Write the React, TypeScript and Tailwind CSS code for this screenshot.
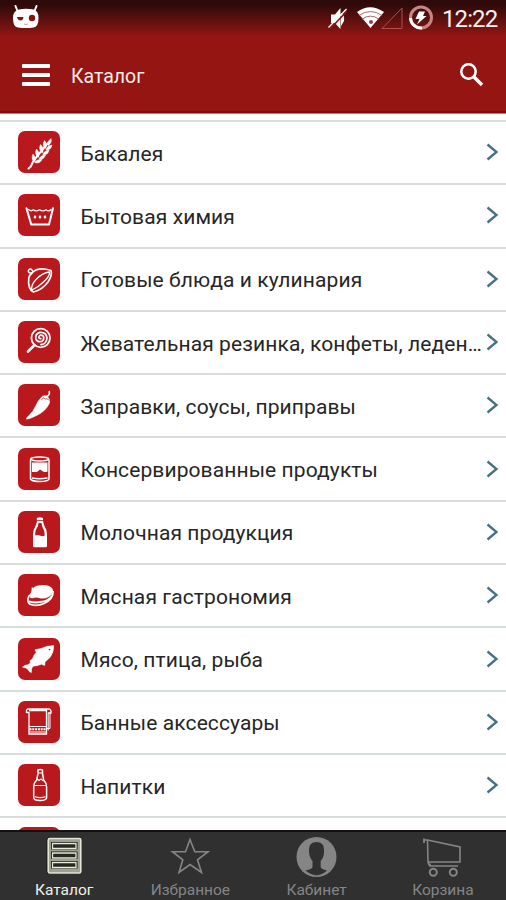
import type { ReactNode } from 'react';

type Category = { title: string; icon: ReactNode };

const CATEGORIES: Category[] = [
  {
    title: 'Бакалея',
    icon: (
      <g fill="#fff" stroke="#fff" strokeWidth=".5">
        <path d="M10.500 37.500 12.800 35.500Q14 31 18.500 26L30 12" fill="none" strokeWidth="2" strokeLinecap="round" />
        <path d="M33 7.500Q34.500 11 30.500 14.500Q27 13 33 7.500Z" />
        <path d="M26.500 9.500Q30 13 27.500 17.500Q23.500 14.500 26.500 9.500Z" />
        <path d="M22.500 13.500Q26.500 17 24.500 22Q20 19 22.500 13.500Z" />
        <path d="M18.500 18Q22.500 21.500 20.500 26.500Q16 23.500 18.500 18Z" />
        <path d="M15 23Q18.500 26 16.800 31Q12.500 28 15 23Z" />
        <path d="M34 14Q33 19.500 28 19Q29 14.500 34 14Z" />
        <path d="M31 19.300Q30 24.500 24.800 23.800Q26 19.500 31 19.300Z" />
        <path d="M27.500 24Q26 29 21 28Q22.500 24 27.500 24Z" />
        <path d="M24 28.500Q22 33 16.800 31.700Q18.500 28 24 28.500Z" />
      </g>
    ),
  },
  {
    title: 'Бытовая химия',
    icon: (
      <g fill="none" stroke="#fff" strokeLinejoin="round" strokeLinecap="round">
        <path d="M8.500 14.300 13.200 30.400H31L35 14.300" strokeWidth="2" />
        <path d="M10.500 15.500Q13 17.800 15.500 15.800Q18 18 21.500 15.800Q25 18 28 15.800Q31 18 33 15.500" strokeWidth="1.300" />
        <path d="M17 22.800v.5M22 22.800v.5M27 22.800v.5" strokeWidth="2.500" />
      </g>
    ),
  },
  {
    title: 'Готовые блюда и кулинария',
    icon: (
      <g fill="none" stroke="#fff" strokeWidth="1.700" strokeLinejoin="round" strokeLinecap="round">
        <path d="M14 15Q20 8.500 33 12.500Q34.500 17 30 24Q24 32 15.500 34Q9.500 31 10.800 20Q11.500 17 14 15Z" />
        <path d="M14 32Q12.500 27.500 18 21.500Q24 15 31.500 14Q32 18 26 23.500Q20 29.500 14 32Z" strokeWidth="1.300" />
        <path d="M14 15Q9.500 15 10.500 12.200Q13 9.500 14.500 13" strokeWidth="1.500" />
      </g>
    ),
  },
  {
    title: 'Жевательная резинка, конфеты, леден…',
    icon: (
      <g fill="none" stroke="#fff" strokeLinecap="round">
        <circle cx="22.700" cy="17" r="9.300" strokeWidth="1.800" />
        <path d="M16.500 24 10 30.500" strokeWidth="2.600" />
        <path d="M22.800 17.700Q20.500 17.600 21 15.600Q22.500 13 25 14.800Q27 18 24 20.200Q19.700 21.800 17.800 18Q17 12.500 22 11.300Q28.500 11 29 17Q28.500 23 23 23.700" strokeWidth="1.700" />
      </g>
    ),
  },
  {
    title: 'Заправки, соусы, приправы',
    icon: (
      <g>
        <path d="M22.500 14.500Q24 11 28.500 12Q33 15 31 20Q27.500 27 19.500 31Q13 34.500 8.500 35.200Q8 34 11 31.500Q15 28 18 21.500Q20 16.500 22.500 14.500Z" fill="#fff" stroke="#fff" strokeWidth=".6" />
        <path d="M28.500 12.500Q32 11.500 31.300 7.500" fill="none" stroke="#fff" strokeWidth="1.700" strokeLinecap="round" />
        <path d="M23.500 15.500Q26 12.500 27.500 15Q30 14 31 16.500" fill="none" stroke="#b9191c" strokeWidth=".7" />
      </g>
    ),
  },
  {
    title: 'Консервированные продукты',
    icon: (
      <g fill="none" stroke="#fff" strokeWidth="1.500">
        <path d="M12.500 11.500V31Q14 33.500 22 33.500T31 31V11.500" />
        <path d="M14 14.500H29.500V23.500Q27 24.500 25 23.500L22 21.500 19 24H14Z" fill="#fff" stroke="none" />
        <ellipse cx="21.700" cy="11" rx="9" ry="2" />
        <path d="M14 30Q21 31.500 29.500 30" />
      </g>
    ),
  },
  {
    title: 'Молочная продукция',
    icon: (
      <g>
        <path d="M18.800 7Q21.800 5.500 25 7V9.200H18.800Z" fill="#fff" />
        <path d="M19 10H25L26 14Q29 19 29 23V35Q29 36.300 27.500 36.300H16.500Q15 36.300 15 35V23Q15 19 18 14Z" fill="#fff" />
        <path d="M20.500 12H23.500L24.200 15.500Q26.800 19.500 26.800 24.500Q24.500 25.800 22.500 24.800Q19.500 23.500 17.200 24.500Q17 19 19.800 15.500Z" fill="#b9191c" />
      </g>
    ),
  },
  {
    title: 'Мясная гастрономия',
    icon: (
      <g fill="#fff">
        <path d="M15 17Q14 12.500 20 11.500Q31 9.500 34.700 15Q36 20 30.500 23Q26 25.500 21 24Q18 23 15 24.200Q11.500 25 12 22Q14.500 20.500 15 17Z" />
        <path d="M14.500 13.500Q15 20 11 22Q8.500 27 11.500 30Q18 33 26 29.500Q35.500 25 35.200 17" fill="none" stroke="#fff" strokeWidth="1.700" />
        <path d="M11 27.500Q18 29.200 25.500 27.600Q31.500 26 34 22" fill="none" stroke="#fff" strokeWidth="2" />
      </g>
    ),
  },
  {
    title: 'Мясо, птица, рыба',
    icon: (
      <g>
        <path d="M35.700 7.500Q36 14 32 19.500L27 24 26.700 27.500 23.500 26.200Q19 28 15 28.200Q13 30.500 13.300 34.700Q10.500 33.500 9.500 31Q7.500 29.500 4.500 29.200Q6.500 26.800 9.700 26.800L12.300 25.200 12 22.800 14.300 21Q15.500 17 18.200 14.500L17 11.700Q20.500 11 23 10.500Q29 7.700 35.700 7.500Z" fill="#fff" stroke="#fff" strokeWidth=".5" />
        <circle cx="31.500" cy="11.500" r=".8" fill="#b9191c" />
      </g>
    ),
  },
  {
    title: 'Банные аксессуары',
    icon: (
      <g fill="none" stroke="#fff" strokeWidth="1.300">
        <path d="M8.500 12V9Q9 8 11 8H31.500Q33.500 9 33 12H30M8.500 11.500H11V33H28.500V9.500H11" />
        <path d="M30.200 12V29.500M32 12V27.500H29" strokeWidth="1" />
        <path d="M11 25.500H28.500M11 31H28.500" strokeWidth="1.200" />
        <path d="M11.500 28.300H28" strokeWidth="2" strokeDasharray="2 .8" />
      </g>
    ),
  },
  {
    title: 'Напитки',
    icon: (
      <g fill="none" stroke="#fff" strokeWidth="1.500" strokeLinejoin="round">
        <path d="M20 6Q22.200 4.800 24.500 6V9.500L25.700 16Q28.600 19 28.600 23V33.500Q28.500 36.500 22 36.500T15.700 33.500V23Q15.700 19 18.700 16L20 9.500Z" />
        <path d="M20 9H24.500M19 15 21 16.500 23 15 25.500 17M16.500 21.500H28.500M17 32.800Q22 34.500 27.500 32.800" strokeWidth="1.100" />
      </g>
    ),
  },
  { title: '', icon: null },
];

const TABS: Category[] = [
  {
    title: 'Каталог',
    icon: (
      <g>
        <rect x="2.500" y="2.500" width="35" height="36.500" rx="2" fill="#151510" />
        <rect x="4.200" y="3.500" width="32.600" height="34.500" rx="1.500" fill="#9da192" stroke="#e4e6d7" strokeWidth="1.600" />
        <path d="M7 7H33.500V14.500H7ZM7 16.500H33.500V24H7ZM7 26H33.500V33.500H7Z" fill="#14150f" />
        <path d="M8.500 8.500H32V13.500H8.500ZM8.500 18H32V23H8.500ZM8.500 27.500H32V32.500H8.500Z" fill="#262720" stroke="#e6e8da" strokeWidth="1.300" />
      </g>
    ),
  },
  {
    title: 'Избранное',
    icon: (
      <path
        d="M20 4.500 24.800 16.700H38L27.500 24.800 31.500 37.500 20 29.500 9 37.500 12.800 24.800 2.500 16.700H15.500Z"
        fill="none"
        stroke="#858585"
        strokeWidth="1.600"
      />
    ),
  },
  {
    title: 'Кабинет',
    icon: (
      <g>
        <circle cx="20.500" cy="22" r="20" fill="#858585" />
        <path d="M20.500 7Q28 7 28 14.500Q28.500 22 24.700 26V32Q25 34 31 35.500Q27 39.500 20.500 40.500Q14 39.500 9.500 35.500Q16.500 34 16.500 32V26Q12.800 22 13 14.500Q13 7 20.500 7Z" fill="#303030" />
      </g>
    ),
  },
  {
    title: 'Корзина',
    icon: (
      <g fill="none" stroke="#858585" strokeWidth="1.600">
        <path d="M2 5H5.500L38 12V27H6L5.500 5M8 28.500V31H36M6 27Q7 31 9 31.200" />
        <circle cx="11.300" cy="37.300" r="3.500" strokeWidth="2" />
        <circle cx="31.300" cy="37.300" r="3.500" strokeWidth="2" />
        <path d="M2 3.500V8" strokeWidth="1.800" />
      </g>
    ),
  },
];

function StatusBar() {
  return (
    <div className="flex h-[37px] items-start bg-linear-to-b from-[#2d0909] from-10% to-[#951513] pl-3 pr-2">
      <svg className="mt-[4px]" width="28" height="26" viewBox="0 0 28 26">
        <path d="M5.500 7 3.500 2M22.500 7 24.500 2" stroke="#fff" strokeWidth="2" strokeLinecap="round" />
        <path d="M7 5.500Q14 4 21.500 5.500Q26.500 6.500 26.500 14Q26.500 23 21.500 23.500Q14 24.500 6 23.500Q1 23 1 14Q1 6.500 7 5.500Z" fill="#fff" />
        <path d="M5 13H11.500Q11 16.500 8.500 16.500T5 13Z" fill="#851412" />
        <circle cx="20" cy="14" r="3.200" fill="#851412" />
        <path d="M12 20Q14 21 16 20" fill="none" stroke="#c58a88" strokeWidth=".8" />
      </svg>
      <svg className="ml-auto mt-[5px]" width="107" height="27" viewBox="0 0 107 27">
        <path d="M4 9.500H8L13.500 3V24L8 18H4Z" fill="#fff" />
        <path d="M14 8Q18 10 17 16L14 21Z" fill="#fff" />
        <path d="M3 24 20 6" stroke="#851412" strokeWidth="1.800" />
        <path d="M1.500 22.500 19.500 4" stroke="#fff" strokeWidth="1.300" />
        <path d="M30 7Q43-2.500 57 7L43.500 23Z" fill="#fff" />
        <path d="M32 10.500Q43.500 2.500 55 10.500M35 14.200Q43.500 8 52 14.200" fill="none" stroke="#a75553" strokeWidth=".9" />
        <circle cx="44" cy="17" r="2" fill="#8f4543" />
        <path d="M55 23.500H75V3Z" fill="none" stroke="#b04e4c" />
        <circle cx="94" cy="12.500" r="10.500" fill="none" stroke="#c98583" strokeWidth="3" />
        <path d="M83.500 13A10.500 10.500 0 0 0 95 23" fill="none" stroke="#fff" strokeWidth="3" />
        <path d="M92 6.500H98L96 11H99.500L90 19.500 92.500 14H88.500Z" fill="#fff" />
      </svg>
      <span className="ml-[8px] mt-[6px] w-[56px] whitespace-nowrap text-[24px] leading-[26px] tracking-[-0.900px] text-[#f8eeee]">12:22</span>
    </div>
  );
}

function Header() {
  return (
    <header className="h-[114px] shrink-0 border-b border-[#b87a7a] bg-[#951513]">
      <StatusBar />
      <div className="flex h-[76px] items-center border-b-2 border-[#8c0808] pl-[22px] pr-[22px]">
        <div className="mt-px flex w-[28px] flex-col gap-[5px]">
          <span className="h-[4px] rounded-[1px] bg-white" />
          <span className="h-[4px] rounded-[1px] bg-white" />
          <span className="h-[4px] rounded-[1px] bg-white" />
        </div>
        <h1 className="ml-[21px] mt-[5px] text-[19.500px] leading-6 text-[#fbecec]">Каталог</h1>
        <svg className="ml-auto" width="26" height="26" viewBox="0 0 26 26" fill="none" stroke="#fff">
          <circle cx="10.500" cy="10.500" r="7.200" strokeWidth="2.600" />
          <path d="M15.800 15.800 24 24" strokeWidth="3.400" />
        </svg>
      </div>
    </header>
  );
}

function CategoryRow({ title, icon }: Category) {
  return (
    <li className="flex h-[63.300px] shrink-0 items-center border-b-2 border-[#d7dddf] pb-px pl-[17.500px] pr-[7px]">
      <svg className="shrink-0" width="42" height="42" viewBox="0 0 42 42">
        <rect width="42" height="42" rx="7" fill="#b9191c" />
        {icon}
      </svg>
      <span className="ml-[21px] mt-[3px] whitespace-nowrap text-[21px] leading-7 tracking-[0.100px] text-[#262626]">{title}</span>
      <svg className="ml-auto shrink-0" width="13" height="18" viewBox="0 0 13 18">
        <path d="M1.500 1.500 10.500 9 1.500 16.500" fill="none" stroke="#477085" strokeWidth="2.300" />
      </svg>
    </li>
  );
}

export default function App() {
  return (
    <div className="flex h-[900px] w-[506px] flex-col overflow-hidden bg-white font-[Roboto,sans-serif]">
      <Header />
      <main className="min-h-0 flex-1 overflow-hidden">
        <div className="h-[8px] border-b-2 border-[#d7dddf]" />
        <ul className="flex flex-col">
          {CATEGORIES.map((category) => (
            <CategoryRow key={category.title} {...category} />
          ))}
        </ul>
      </main>
      <nav className="grid h-[70px] shrink-0 grid-cols-4 border-t-2 border-[#111] bg-[#303030] pl-px">
        {TABS.map((tab, index) => (
          <div key={tab.title} className="flex flex-col items-center">
            <svg className="mt-[3px]" width="41" height="43" viewBox="0 0 41 43">
              {tab.icon}
            </svg>
            <span className={`mt-[2px] text-[15.500px] leading-5 ${index === 0 ? 'text-[#f0f0e6]' : 'text-[#858585]'}`}>{tab.title}</span>
          </div>
        ))}
      </nav>
    </div>
  );
}
